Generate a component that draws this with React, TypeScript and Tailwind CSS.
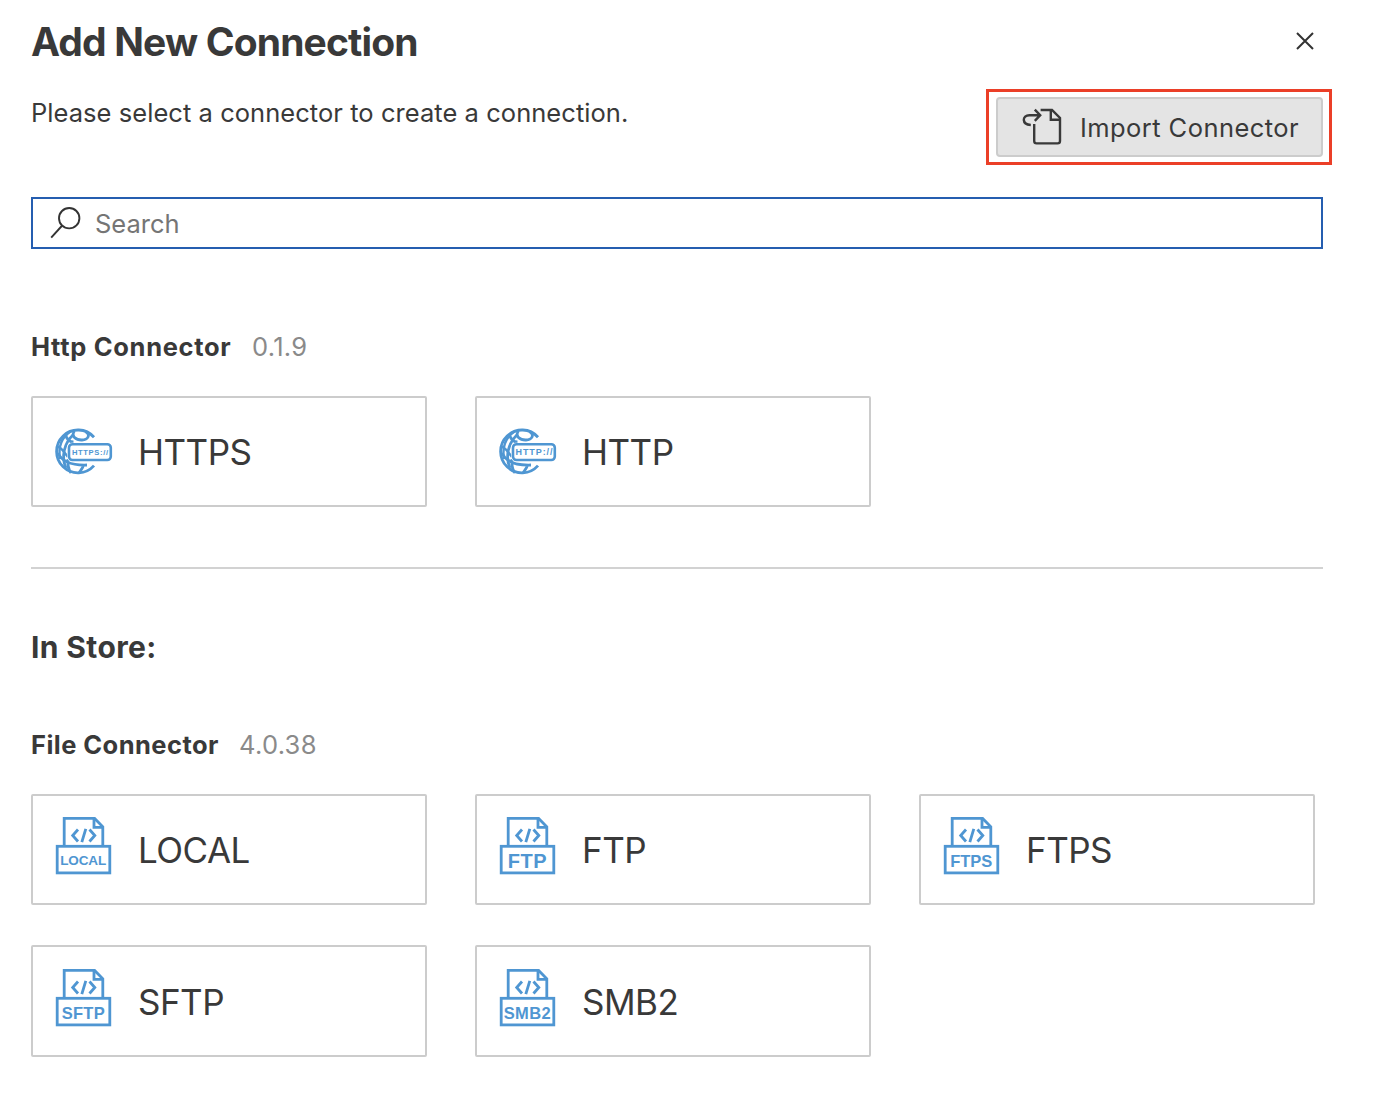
import React from "react";

const BLUE = "#4f96d2";

function GlobeIcon({ label, size, width, id }: { label: string; size: number; width: number; id: string }) {
  return (
    <svg width="60" height="60" viewBox="0 0 60 60" fill="none" stroke={BLUE} strokeWidth="2.8" className="mt-[3px] shrink-0">
      <defs>
        <clipPath id={id}>
          <path d="M0 0H60V19.8H18C15 19.8 13.2 21 13.2 24V34C13.2 37 15 38.2 18 38.2H60V60H0Z" />
        </clipPath>
      </defs>
      <g clipPath={`url(#${id})`}>
        <path d="M40 14.2A21.4 21.4 0 1 0 40 42.6" />
        <path d="M20.5 8C16.5 13 22 17.2 28 17C34 16.8 37 12 31.5 8.6" />
        <path d="M11.5 12C13 16.5 15.5 19 19.5 19M19.5 11.5C10 20 7 34 12 45" />
        <path d="M17 8C8 14 4 24 6 36" strokeWidth="2.4" />
        <path d="M4 24C7 24 10 29 14 34" strokeWidth="2.4" />
        <path d="M4 30C8 39 18 42.5 33 42M14 36C13.5 42 14 46 17 50M29.5 42C29 45 27 47 25 50" />
      </g>
      <rect x="15" y="21.2" width="41.8" height="15.8" rx="3.5" strokeWidth="2.6" />
      <text x="36" y={29.1 + size * 0.36} textAnchor="middle" textLength={width} fontSize={size} fill={BLUE} stroke="none" fontWeight="700" fontFamily="Liberation Sans, sans-serif">{label}</text>
    </svg>
  );
}

function FileIcon({ label, size, width }: { label: string; size: number; width: number }) {
  return (
    <svg width="60" height="60" viewBox="0 0 60 60" fill="none" stroke={BLUE} strokeWidth="2.8" className="-mt-[7px] shrink-0">
      <path d="M10.2 30V2.4H40.6L48.8 10.8V30" />
      <path d="M40 2.4V11.4H48.8" />
      <path d="M24 13.5L18.7 19.5L24 25.5M35.5 13.5L40.8 19.5L35.5 25.5M31.8 12.8L27.8 26.2" />
      <rect x="3.2" y="30.3" width="52.6" height="26.6" />
      <text x="29.2" y={44.6 + size * 0.36} textAnchor="middle" textLength={width} fontSize={size} fill={BLUE} stroke="none" fontWeight="700" fontFamily="Liberation Sans, sans-serif">{label}</text>
    </svg>
  );
}

function Card({ icon, name, className = "h-[111px]" }: { icon: React.ReactNode; name: string; className?: string }) {
  return (
    <div className={`flex items-center rounded-[2px] border-2 border-[#cccccc] pl-[21px] ${className}`}>
      {icon}
      <span className="ml-[24px] text-[35px] leading-[44px] tracking-[-0.5px]">{name}</span>
    </div>
  );
}

function SectionTitle({ name, version, className }: { name: string; version: string; className: string }) {
  return (
    <div className="flex h-8 items-center text-[25.5px] leading-8">
      <h3 className={`font-bold ${className}`}>{name}</h3>
      <span className="tracking-[0.3px] text-[#8a8a8a]">{version}</span>
    </div>
  );
}

export default function App() {
  return (
    <main className="h-[1094px] w-[1388px] overflow-hidden bg-white pl-[31px] pr-[65px] pt-[17px] font-['Inter',sans-serif] text-[#393939]">
      <header className="flex h-[50px] items-center justify-between">
        <h1 className="text-[39px] font-bold leading-[50px] tracking-[-0.85px]">Add New Connection</h1>
        <svg width="18" height="18" viewBox="0 0 18 18" stroke="#333" strokeWidth="2" className="-mt-[2px] mr-[9px]">
          <path d="M1 1L17 17M17 1L1 17" />
        </svg>
      </header>

      <div className="mt-[30px] flex h-[60px] justify-between">
        <p className="text-[25.5px] leading-8 tracking-[0.05px]">Please select a connector to create a connection.</p>
        <div className="relative">
          <button className="flex h-[60px] w-[327px] items-center rounded-[4px] border-2 border-[#cccccc] bg-[#e4e4e4] pl-[24px] text-[25.5px]">
            <svg width="40" height="40" viewBox="0 0 40 40" fill="none" stroke="#393939" strokeWidth="2.4">
              <path d="M18.6 3H30L38 11V34C38 35.4 37 36.4 35.6 36.4H14.6C13.2 36.4 12.2 35.4 12.2 34V17" />
              <path d="M28.8 3.2V12.8H37.8" />
              <path d="M8.8 18C-0.6 17.4 0 8.2 7.4 8.2H17M12.8 2.6L18.2 8.2L12.8 13.8" />
            </svg>
            <span className="ml-[18px] mt-[2px] whitespace-nowrap tracking-[0.43px]">Import Connector</span>
          </button>
          <div className="pointer-events-none absolute -left-[10px] -top-2 h-[76px] w-[346px] border-[3px] border-[#eb3f28]" />
        </div>
      </div>

      <div className="mt-10 flex h-[52px] items-center border-2 border-[#255eb0] pl-[17px]">
        <svg width="32" height="34" viewBox="0 0 32 34" fill="none" stroke="#333" strokeWidth="1.9">
          <circle cx="19.2" cy="12.2" r="10.2" />
          <path d="M12.2 19.5L1.2 31.6" />
        </svg>
        <input placeholder="Search" className="ml-[13px] mt-[2px] flex-1 text-[25.5px] leading-8 outline-none placeholder:text-[#757575]" />
      </div>

      <section className="mt-[82px]">
        <SectionTitle name="Http Connector" version="0.1.9" className="w-[221px] tracking-[0.68px]" />
        <div className="mt-[33px] grid grid-cols-[396px_396px_396px] gap-x-12 gap-y-10">
          <Card icon={<GlobeIcon id="globe-https" label="HTTPS://" size={7.6} width={36} />} name="HTTPS" />
          <Card icon={<GlobeIcon id="globe-http" label="HTTP://" size={9} width={37} />} name="HTTP" />
        </div>
      </section>

      <hr className="mt-[60px] border-t-2 border-[#d2d2d2]" />

      <h2 className="mt-[58px] text-[30px] font-bold leading-10 tracking-[0.38px]">In Store:</h2>

      <section className="mt-[62px]">
        <SectionTitle name="File Connector" version="4.0.38" className="w-[208px] tracking-[0.45px]" />
        <div className="mt-[33px] grid grid-cols-[396px_396px_396px] gap-x-12 gap-y-10">
          <Card icon={<FileIcon label="LOCAL" size={13.5} width={46} />} name="LOCAL" />
          <Card icon={<FileIcon label="FTP" size={20} width={39} />} name="FTP" />
          <Card icon={<FileIcon label="FTPS" size={16.5} width={42} />} name="FTPS" />
          <Card icon={<FileIcon label="SFTP" size={16.5} width={43} />} name="SFTP" className="h-[112px] pt-px" />
          <Card icon={<FileIcon label="SMB2" size={16.5} width={47} />} name="SMB2" className="h-[112px] pt-px" />
        </div>
      </section>
    </main>
  );
}
